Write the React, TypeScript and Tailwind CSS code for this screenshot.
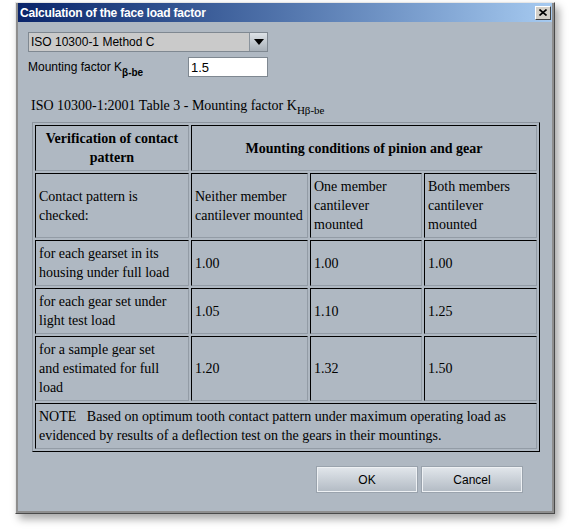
import React from "react";

const serif = { fontFamily: '"Liberation Serif", "Times New Roman", serif' };

function Cell({
  children,
  className = "",
  colSpan,
}: {
  children: React.ReactNode;
  className?: string;
  colSpan?: number;
}) {
  return (
    <td
      colSpan={colSpan}
      className={
        "border-t border-l border-t-black border-l-black border-r border-b border-r-[#939ca6] border-b-[#939ca6] px-[3px] py-[3px] align-middle " +
        className
      }
    >
      {children}
    </td>
  );
}

export default function App() {
  return (
    <div className="w-[570px] h-[530px] bg-white font-['Liberation_Sans',Arial,sans-serif] text-black">
      <div className="pl-[15px] pt-[2px]">
        {/* window */}
        <div className="w-[540px] h-[512px] border border-t-[#e6e6e6] border-l-[#e6e6e6] border-r-[#4a4a4a] border-b-[#4a4a4a] shadow-[4px_5px_8px_rgba(0,0,0,0.35)]">
          <div className="w-full h-full border-l-2 border-r-2 border-b-2 border-[#8e8e8e] bg-[#afb8c2] flex flex-col">
            {/* title bar */}
            <div className="h-[19px] bg-linear-to-r from-[#0a246a] to-[#a6caf0] flex items-center justify-between pl-[2px] pr-[1px]">
              <span className="text-white font-bold text-[12px] leading-none tracking-[-0.2px]">
                Calculation of the face load factor
              </span>
              <div className="w-[16px] h-[14px] bg-[#d4d0c8] border border-t-white border-l-white border-r-[#404040] border-b-[#404040] flex items-center justify-center">
                <svg width="8" height="7" viewBox="0 0 8 7">
                  <path d="M0.5 0.5 L7.5 6.5 M7.5 0.5 L0.5 6.5" stroke="black" strokeWidth="1.6" />
                </svg>
              </div>
            </div>

            {/* body */}
            <div className="flex flex-col pl-[10px] pt-[10px]">
              {/* combo */}
              <div className="w-[240px] h-[20px] border border-[#7f8891] bg-[#cacaca] flex items-stretch">
                <div className="flex-1 flex items-center pl-[2px] text-[12px] leading-none">
                  ISO 10300-1 Method C
                </div>
                <div className="w-[18px] border-l border-[#8a939c] bg-linear-to-b from-[#dde2e7] to-[#a8b0b8] flex items-center justify-center">
                  <svg width="10" height="6" viewBox="0 0 10 6">
                    <polygon points="0,0 10,0 5,6" fill="black" />
                  </svg>
                </div>
              </div>

              {/* mounting factor */}
              <div className="flex items-center mt-[5px] h-[20px]">
                <div className="w-[160px] text-[12px] leading-none">
                  Mounting factor K
                  <span className="text-[10px] font-semibold relative top-[5px]">β-be</span>
                </div>
                <div className="w-[80px] h-[20px] border border-[#7f8891] bg-white flex items-center pl-[2px] text-[13px] leading-none">
                  1.5
                </div>
              </div>

              {/* table title */}
              <div className="mt-[19px] ml-[3px] text-[14px] leading-[19px]" style={serif}>
                ISO 10300-1:2001 Table 3 - Mounting factor K
                <span className="text-[11px] relative top-[4px]">Hβ-be</span>
              </div>

              {/* table */}
              <table
                className="mt-[6px] ml-[4px] w-[508px] border-separate border-spacing-[2px] border border-t-[#8d959e] border-l-[#8d959e] border-r-black border-b-black text-[14px] leading-[19px]"
                style={serif}
              >
                <tbody>
                  <tr>
                    <Cell className="font-bold text-center">
                      Verification of contact
                      <br />
                      pattern
                    </Cell>
                    <Cell colSpan={3} className="font-bold text-center">
                      Mounting conditions of pinion and gear
                    </Cell>
                  </tr>
                  <tr>
                    <Cell className="w-[154px] whitespace-nowrap">
                      Contact pattern is
                      <br />
                      checked:
                    </Cell>
                    <Cell className="w-[117px] whitespace-nowrap">
                      Neither member
                      <br />
                      cantilever mounted
                    </Cell>
                    <Cell className="w-[112px] whitespace-nowrap">
                      One member
                      <br />
                      cantilever
                      <br />
                      mounted
                    </Cell>
                    <Cell className="w-[113px] whitespace-nowrap">
                      Both members
                      <br />
                      cantilever
                      <br />
                      mounted
                    </Cell>
                  </tr>
                  <tr>
                    <Cell className="whitespace-nowrap">
                      for each gearset in its
                      <br />
                      housing under full load
                    </Cell>
                    <Cell>1.00</Cell>
                    <Cell>1.00</Cell>
                    <Cell>1.00</Cell>
                  </tr>
                  <tr>
                    <Cell className="whitespace-nowrap">
                      for each gear set under
                      <br />
                      light test load
                    </Cell>
                    <Cell>1.05</Cell>
                    <Cell>1.10</Cell>
                    <Cell>1.25</Cell>
                  </tr>
                  <tr>
                    <Cell className="whitespace-nowrap">
                      for a sample gear set
                      <br />
                      and estimated for full
                      <br />
                      load
                    </Cell>
                    <Cell>1.20</Cell>
                    <Cell>1.32</Cell>
                    <Cell>1.50</Cell>
                  </tr>
                  <tr>
                    <Cell colSpan={4} className="whitespace-nowrap">
                      NOTE{"\u00a0\u00a0\u00a0"}Based on optimum tooth contact pattern under maximum operating load as
                      <br />
                      evidenced by results of a deflection test on the gears in their mountings.
                    </Cell>
                  </tr>
                </tbody>
              </table>

              {/* buttons */}
              <div className="flex justify-end gap-[5px] mt-[15px] mr-[30px]">
                {["OK", "Cancel"].map((t) => (
                  <div
                    key={t}
                    className="w-[100px] h-[25px] border border-[#eef1f4] bg-linear-to-b from-[#e0e5ea] to-[#b4bcc5] shadow-[0_0_0_1px_#9aa3ad] flex items-center justify-center text-[12px] leading-none"
                  >
                    {t}
                  </div>
                ))}
              </div>
            </div>
          </div>
        </div>
      </div>
    </div>
  );
}
